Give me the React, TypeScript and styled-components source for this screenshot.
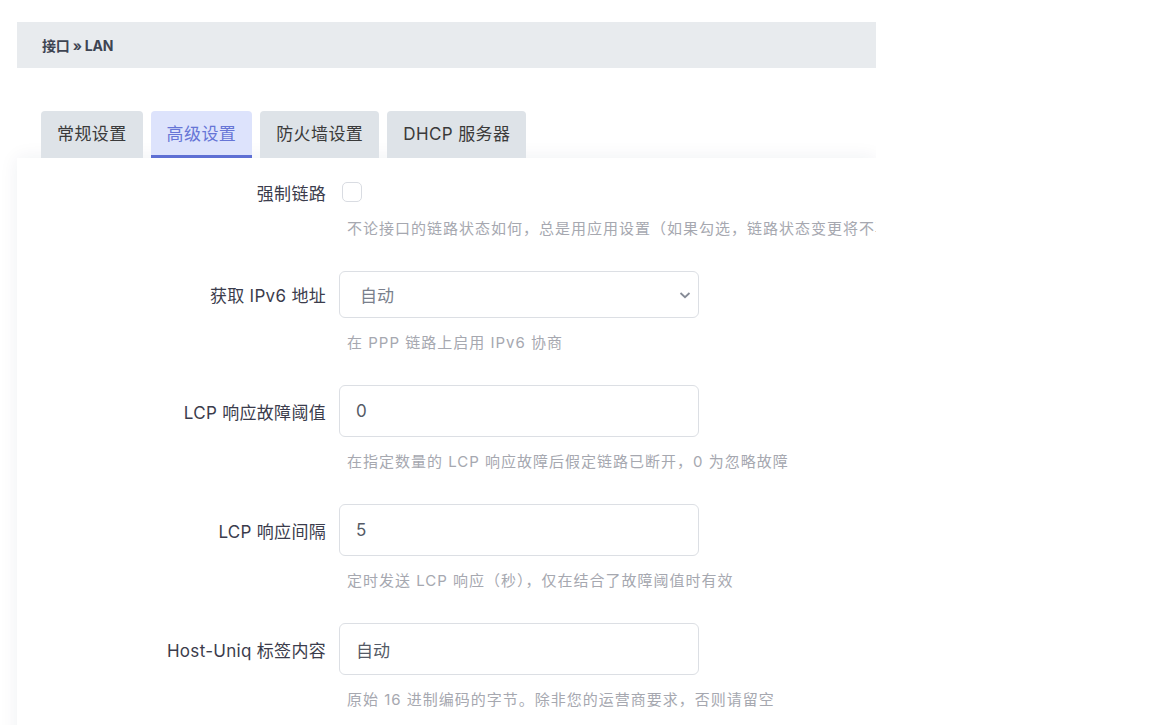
import React from 'react';
import styled, { createGlobalStyle } from 'styled-components';

const GlobalStyle = createGlobalStyle`
  html, body {
    margin: 0;
    padding: 0;
    background: #fff;
  }
  body {
    font-family: Inter, "Noto Sans CJK SC", "Noto Sans", sans-serif;
    color: #3a3b4a;
  }
`;

const Page = styled.div`
  width: 876px;
  height: 725px;
  overflow: hidden;
  padding: 22px 0 0 17px;
  box-sizing: border-box;
`;

const Breadcrumb = styled.div`
  height: 46px;
  background: #e8ebee;
  display: flex;
  align-items: center;
  padding-left: 25px;
  font-size: 14px;
  font-weight: 700;
  color: #3e4452;
  letter-spacing: -0.2px;
`;

const Tabs = styled.div`
  display: flex;
  gap: 8px;
  margin-top: 43px;
  padding-left: 24px;
  position: relative;
  z-index: 1;
`;

const Tab = styled.div<{ $active?: boolean }>`
  height: 47px;
  box-sizing: border-box;
  padding: 0 16px 1px;
  display: flex;
  align-items: center;
  font-size: 17px;
  letter-spacing: 0.4px;
  border-radius: 4px 4px 0 0;
  background: ${({ $active }) => ($active ? '#dde3fc' : '#dee3e8')};
  color: ${({ $active }) => ($active ? '#6675d6' : '#3a3a3a')};
  border-bottom: 3px solid ${({ $active }) => ($active ? '#5e6fd4' : 'transparent')};
`;

const Panel = styled.div`
  background: #fff;
  height: 600px;
  box-shadow: 0 0 18px rgba(30, 40, 80, 0.07);
  padding-top: 22px;
  display: flex;
  flex-direction: column;
`;

const Row = styled.div`
  display: grid;
  grid-template-columns: 309px 1fr;
  column-gap: 13px;
  margin-bottom: 32px;
`;

const Label = styled.div<{ $h: number }>`
  height: ${({ $h }) => $h}px;
  display: flex;
  align-items: center;
  justify-content: flex-end;
  font-size: 17px;
  letter-spacing: 0.3px;
  color: #3b3c4c;
  white-space: nowrap;
`;

const Control = styled.div`
  display: flex;
  flex-direction: column;
  align-items: flex-start;
  min-width: 0;
`;

const CheckWrap = styled.div`
  height: 24px;
  display: flex;
  align-items: center;
  padding-left: 3px;
`;

const Checkbox = styled.span`
  width: 18px;
  height: 18px;
  border: 1px solid #d9dce2;
  border-radius: 5px;
  background: #fff;
`;

const Field = styled.div<{ $h: number }>`
  width: 360px;
  height: ${({ $h }) => $h}px;
  box-sizing: border-box;
  border: 1px solid #dcdfe4;
  border-radius: 6px;
  display: flex;
  align-items: center;
  justify-content: space-between;
  padding: 0 6px 0 16px;
  font-size: 17px;
  color: #555a66;
  background: #fff;
`;

const SelectText = styled.span`
  color: #7a7f8c;
  padding-left: 4px;
`;

const Chevron = styled.svg`
  width: 14px;
  height: 14px;
`;

const Desc = styled.div`
  margin-top: 15px;
  padding-left: 8px;
  font-size: 15px;
  letter-spacing: 1px;
  line-height: 20px;
  color: #a6a8b0;
  white-space: nowrap;
`;

type Item = {
  label: string;
  kind: 'check' | 'select' | 'input';
  value?: string;
  desc: string;
};

const items: Item[] = [
  {
    label: '强制链路',
    kind: 'check',
    desc: '不论接口的链路状态如何，总是用应用设置（如果勾选，链路状态变更将不再触发热插拔事件）',
  },
  { label: '获取 IPv6 地址', kind: 'select', value: '自动', desc: '在 PPP 链路上启用 IPv6 协商' },
  {
    label: 'LCP 响应故障阈值',
    kind: 'input',
    value: '0',
    desc: '在指定数量的 LCP 响应故障后假定链路已断开，0 为忽略故障',
  },
  {
    label: 'LCP 响应间隔',
    kind: 'input',
    value: '5',
    desc: '定时发送 LCP 响应（秒），仅在结合了故障阈值时有效',
  },
  {
    label: 'Host-Uniq 标签内容',
    kind: 'input',
    value: '自动',
    desc: '原始 16 进制编码的字节。除非您的运营商要求，否则请留空',
  },
];

const heights = { check: 24, select: 47, input: 52 };

const FormRow = ({ item }: { item: Item }) => {
  const h = heights[item.kind];
  return (
    <Row>
      <Label $h={h}>{item.label}</Label>
      <Control>
        {item.kind === 'check' && (
          <CheckWrap>
            <Checkbox />
          </CheckWrap>
        )}
        {item.kind === 'select' && (
          <Field $h={h}>
            <SelectText>{item.value}</SelectText>
            <Chevron viewBox="0 0 14 14">
              <path d="M2.5 5 L7 9.2 L11.5 5" fill="none" stroke="#868b96" strokeWidth="1.8" />
            </Chevron>
          </Field>
        )}
        {item.kind === 'input' && <Field $h={h}>{item.value}</Field>}
        <Desc>{item.desc}</Desc>
      </Control>
    </Row>
  );
};

export default function App() {
  return (
    <>
      <GlobalStyle />
      <Page>
        <Breadcrumb>接口 » LAN</Breadcrumb>
        <Tabs>
          <Tab>常规设置</Tab>
          <Tab $active>高级设置</Tab>
          <Tab>防火墙设置</Tab>
          <Tab>DHCP 服务器</Tab>
        </Tabs>
        <Panel>
          {items.map((it) => (
            <FormRow key={it.label} item={it} />
          ))}
        </Panel>
      </Page>
    </>
  );
}
